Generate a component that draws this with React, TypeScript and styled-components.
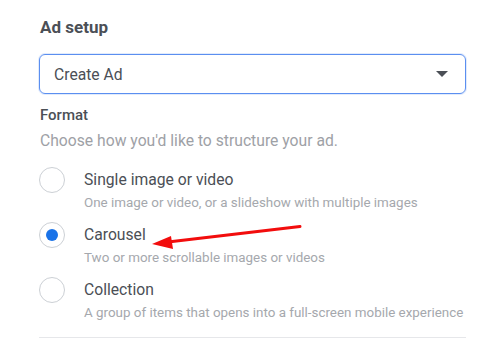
import React from "react";
import styled, { createGlobalStyle } from "styled-components";

const GlobalStyle = createGlobalStyle`
  html, body {
    margin: 0;
    padding: 0;
    background: #ffffff;
  }
  body {
    font-family: Roboto, "Liberation Sans", Arial, sans-serif;
  }
`;

const Page = styled.div`
  position: relative;
  width: 487px;
  height: 341px;
  overflow: hidden;
  background: #ffffff;
  padding: 17px 21px 0 39px;
  box-sizing: border-box;
`;

const Title = styled.div`
  font-size: 17px;
  line-height: 20px;
  font-weight: 700;
  color: #4b4f56;
  padding-left: 1px;
`;

const Select = styled.div`
  margin-top: 17px;
  height: 40px;
  box-sizing: border-box;
  border: 1px solid #5b8ff0;
  border-radius: 6px;
  box-shadow: 0 0 0 1px rgba(91, 143, 240, 0.18);
  display: flex;
  align-items: center;
  justify-content: space-between;
  padding: 0 17px 0 14px;
`;

const SelectText = styled.span`
  font-size: 15.7px;
  color: #4b4f56;
`;

const Caret = styled.span`
  width: 0;
  height: 0;
  border-left: 6px solid transparent;
  border-right: 6px solid transparent;
  border-top: 6px solid #4b4f56;
`;

const SectionLabel = styled.div`
  margin-top: 12px;
  font-size: 15px;
  line-height: 18px;
  font-weight: 500;
  color: #4b4f56;
  padding-left: 1px;
`;

const Hint = styled.div`
  margin-top: 7px;
  font-size: 15.7px;
  line-height: 20px;
  color: #9ea1a6;
  padding-left: 1px;
`;

const OptionList = styled.div`
  margin-top: 19px;
  display: flex;
  flex-direction: column;
  gap: 13px;
`;

const Option = styled.div`
  display: grid;
  grid-template-columns: 26px 1fr;
  column-gap: 19px;
  align-items: start;
`;

const Radio = styled.span<{ $checked?: boolean }>`
  width: 26px;
  height: 26px;
  margin-top: -3px;
  box-sizing: border-box;
  border-radius: 50%;
  border: 1px solid #ccd0d5;
  display: flex;
  align-items: center;
  justify-content: center;
  &::after {
    content: "";
    display: ${(p) => (p.$checked ? "block" : "none")};
    width: 12px;
    height: 12px;
    border-radius: 50%;
    background: #1a73e8;
  }
`;

const OptionText = styled.div`
  display: flex;
  flex-direction: column;
`;

const OptionLabel = styled.div`
  font-size: 15.7px;
  line-height: 20px;
  color: #4b4f56;
`;

const OptionDesc = styled.div`
  margin-top: 4px;
  font-size: 13.4px;
  line-height: 18px;
  color: #a5a8ad;
`;

const Divider = styled.div`
  margin-top: 15px;
  height: 1px;
  background: #e6e7ea;
`;

const Annotation = styled.svg`
  position: absolute;
  left: 0;
  top: 0;
  pointer-events: none;
`;

const options = [
  {
    label: "Single image or video",
    desc: "One image or video, or a slideshow with multiple images",
  },
  {
    label: "Carousel",
    desc: "Two or more scrollable images or videos",
    checked: true,
  },
  {
    label: "Collection",
    desc: "A group of items that opens into a full-screen mobile experience",
  },
];

export default function App() {
  return (
    <>
      <GlobalStyle />
      <Page>
        <Title>Ad setup</Title>
        <Select>
          <SelectText>Create Ad</SelectText>
          <Caret />
        </Select>
        <SectionLabel>Format</SectionLabel>
        <Hint>Choose how you'd like to structure your ad.</Hint>
        <OptionList>
          {options.map((o) => (
            <Option key={o.label}>
              <Radio $checked={o.checked} />
              <OptionText>
                <OptionLabel>{o.label}</OptionLabel>
                <OptionDesc>{o.desc}</OptionDesc>
              </OptionText>
            </Option>
          ))}
        </OptionList>
        <Divider />
        <Annotation width="487" height="341" viewBox="0 0 487 341">
          <line
            x1="300"
            y1="226.5"
            x2="168"
            y2="242"
            stroke="#f20d0d"
            strokeWidth="3"
            strokeLinecap="round"
          />
          <polygon points="152,244 171,236 173,249" fill="#f20d0d" />
        </Annotation>
      </Page>
    </>
  );
}
